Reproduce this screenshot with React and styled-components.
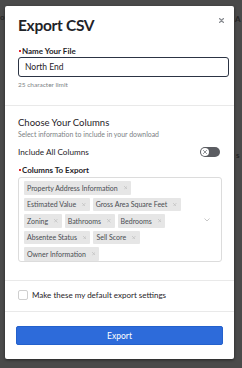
import React from 'react';
import styled, { createGlobalStyle } from 'styled-components';

const GlobalStyle = createGlobalStyle`
  html, body {
    margin: 0;
    padding: 0;
    background: #4a4a4a;
    font-family: "Lato", "Liberation Sans", sans-serif;
  }
`;

const Page = styled.div`
  position: relative;
  width: 242px;
  height: 368px;
  overflow: hidden;
  padding: 6px 0 0 5px;
  box-sizing: border-box;
`;

const BackText = styled.span`
  position: absolute;
  font-size: 8px;
  font-weight: 700;
  color: #262626;
  letter-spacing: 0.5px;
`;

const Modal = styled.div`
  position: relative;
  width: 229px;
  height: 353px;
  background: #fff;
  border-radius: 2px;
  box-shadow: 0 1px 3px rgba(0, 0, 0, 0.5);
  display: flex;
  flex-direction: column;
`;

const Close = styled.button`
  position: absolute;
  top: 9px;
  right: 8px;
  border: none;
  background: none;
  padding: 0;
  width: 10px;
  height: 10px;
  display: flex;
  align-items: center;
  justify-content: center;
  cursor: pointer;
`;

const Section = styled.div`
  padding: ${p => p.$pad};
  border-bottom: ${p => (p.$last ? 'none' : '1px solid #e9e9e9')};
  display: flex;
  flex-direction: column;
`;

const Title = styled.h2`
  margin: 0;
  font-size: 15.5px;
  line-height: 20px;
  font-weight: 700;
  color: #1f2328;
  letter-spacing: -0.3px;
`;

const Label = styled.div`
  margin-top: ${p => p.$mt || 0}px;
  font-size: 8px;
  line-height: 10px;
  font-weight: 700;
  color: #1f2328;
  display: flex;
  align-items: center;
`;

const Req = styled.span`
  width: 2px;
  height: 2px;
  background: #e0252c;
  margin: 0 1px 0 1px;
`;

const Input = styled.input`
  margin-top: 1px;
  height: 20px;
  box-sizing: border-box;
  border: 1px solid #2c3444;
  border-radius: 3px;
  padding: 0 6px;
  font-family: inherit;
  font-size: 8.5px;
  color: #1f2328;
  outline: none;
`;

const Hint = styled.div`
  margin-top: ${p => p.$mt || 0}px;
  font-size: ${p => p.$size || 6.5}px;
  line-height: 8px;
  color: #7c7f85;
`;

const Heading = styled.div`
  font-size: 9.5px;
  line-height: 12px;
  color: #1f2328;
`;

const ToggleRow = styled.div`
  margin-top: 8px;
  height: 12px;
  display: flex;
  align-items: center;
  justify-content: space-between;
  padding-right: 14px;
  font-size: 8.2px;
  color: #1f2328;
`;

const Toggle = styled.div`
  width: 20px;
  height: 10px;
  border-radius: 5px;
  background: #5b5d62;
  display: flex;
  align-items: center;
  padding-left: 1px;
  box-sizing: border-box;
`;

const Knob = styled.div`
  width: 8px;
  height: 8px;
  border-radius: 50%;
  background: #fff;
  display: flex;
  align-items: center;
  justify-content: center;
`;

const Select = styled.div`
  margin-top: 2px;
  margin-right: 12px;
  height: 85px;
  box-sizing: border-box;
  border: 1px solid #dcdcdc;
  border-radius: 3px;
  display: flex;
`;

const Values = styled.div`
  flex: 1;
  display: flex;
  flex-wrap: wrap;
  align-content: flex-start;
  gap: 3px 3px;
  padding: 3px 0 1px 5px;
`;

const Chip = styled.div`
  height: 13.5px;
  background: #e6e6e6;
  border-radius: 1px;
  display: flex;
  align-items: center;
  gap: 6px;
  padding: 0 4px 0 3px;
  font-size: 7px;
  color: #4a4d52;
`;

const Indicator = styled.div`
  width: 28px;
  display: flex;
  align-items: center;
  justify-content: center;
`;

const CheckRow = styled.label`
  display: flex;
  align-items: center;
  gap: 4px;
  height: 10px;
  font-size: 8px;
  color: #1f2328;
`;

const Box = styled.span`
  width: 10px;
  height: 10px;
  box-sizing: border-box;
  border: 1px solid #cfcfcf;
  border-radius: 2px;
  background: #fff;
`;

const ExportButton = styled.button`
  height: 19px;
  border: 1px solid #2461cc;
  border-radius: 2px;
  background: #2d6bda;
  color: #fff;
  font-family: inherit;
  font-size: 8.5px;
  cursor: pointer;
`;

const X = ({ size = 5, color = '#b5b5b5', w = 1 }) => (
  <svg width={size} height={size} viewBox="0 0 10 10">
    <path d="M1 1L9 9M9 1L1 9" stroke={color} strokeWidth={w * 2} strokeLinecap="round" />
  </svg>
);

const rows = [
  'Property Address Information',
  'Estimated Value',
  'Gross Area Square Feet',
  'Zoning',
  'Bathrooms',
  'Bedrooms',
  'Absentee Status',
  'Sell Score',
  'Owner Information',
];

export default function App() {
  return (
    <>
      <GlobalStyle />
      <Page>
        <BackText style={{ left: 0, top: 12 }}>ot</BackText>
        <BackText style={{ left: 235, top: 14 }}>A</BackText>
        <BackText style={{ left: 236, top: 150 }}>s</BackText>
        <Modal>
          <Close aria-label="Close">
            <X size={5} color="#8a8d92" w={1.2} />
          </Close>
          <Section $pad="9px 5px 16px 13px">
            <Title>Export CSV</Title>
            <Label $mt={11}>
              <Req />Name Your File
            </Label>
            <Input defaultValue="North End" />
            <Hint $mt={4}>25 character limit</Hint>
          </Section>
          <Section $pad="11px 0 18px 13px">
            <Heading>Choose Your Columns</Heading>
            <Hint $mt={1} $size={6.9}>Select information to include in your download</Hint>
            <ToggleRow>
              <span>Include All Columns</span>
              <Toggle>
                <Knob>
                  <X size={4} color="#8a8d92" w={1.2} />
                </Knob>
              </Toggle>
            </ToggleRow>
            <Label $mt={7}>
              <Req />Columns To Export
            </Label>
            <Select>
              <Values>
                {rows.map(r => (
                  <Chip key={r}>
                    {r}
                    <X size={3.5} color="#bdbdbd" />
                  </Chip>
                ))}
              </Values>
              <Indicator>
                <svg width="6" height="4" viewBox="0 0 12 8">
                  <path d="M1 1L6 6L11 1" fill="none" stroke="#b0b0b0" strokeWidth="1.4" />
                </svg>
              </Indicator>
            </Select>
          </Section>
          <Section $pad="9px 13px 11px 13px">
            <CheckRow>
              <Box />
              Make these my default export settings
            </CheckRow>
          </Section>
          <Section $pad="14px 11px 0 11px" $last>
            <ExportButton>Export</ExportButton>
          </Section>
        </Modal>
      </Page>
    </>
  );
}
